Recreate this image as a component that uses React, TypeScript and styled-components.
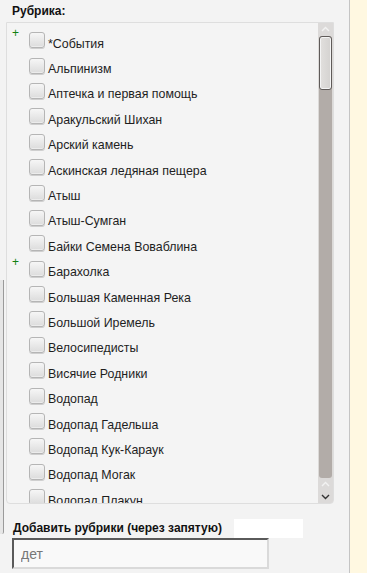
import React from "react";
import styled, { createGlobalStyle } from "styled-components";

const GlobalStyle = createGlobalStyle`
  html, body {
    margin: 0;
    padding: 0;
    background: #f3f3f3;
    overflow: hidden;
  }
`;

const rubrics = [
  { name: "*События", expandable: true },
  { name: "Альпинизм" },
  { name: "Аптечка и первая помощь" },
  { name: "Аракульский Шихан" },
  { name: "Арский камень" },
  { name: "Аскинская ледяная пещера" },
  { name: "Атыш" },
  { name: "Атыш-Сумган" },
  { name: "Байки Семена Воваблина" },
  { name: "Барахолка", expandable: true },
  { name: "Большая Каменная Река" },
  { name: "Большой Иремель" },
  { name: "Велосипедисты" },
  { name: "Висячие Родники" },
  { name: "Водопад" },
  { name: "Водопад Гадельша" },
  { name: "Водопад Кук-Караук" },
  { name: "Водопад Могак" },
  { name: "Водопад Плакун" },
];

const Arrow = ({ up }: { up?: boolean }) => (
  <svg width="9" height="6" viewBox="0 0 9 6">
    <path
      d={up ? "M1 5 L4.5 1.5 L8 5" : "M1 1 L4.5 4.5 L8 1"}
      fill="none"
      stroke={up ? "#f2f2f2" : "#333"}
      strokeWidth="1.4"
    />
  </svg>
);

export default function App() {
  return (
    <Page>
      <GlobalStyle />
      <Gutter>
        <GutterStrip />
      </Gutter>
      <Panel>
        <Title>Рубрика:</Title>
        <ListBox>
          <List>
            {rubrics.map((r) => (
              <Row key={r.name}>
                <Plus>{r.expandable ? "+" : ""}</Plus>
                <Check />
                <Label>{r.name}</Label>
              </Row>
            ))}
          </List>
          <Scrollbar>
            <StepButton>
              <Arrow up />
            </StepButton>
            <Track>
              <Thumb />
            </Track>
            <StepButton>
              <Arrow up />
            </StepButton>
            <StepButton>
              <Arrow />
            </StepButton>
          </Scrollbar>
        </ListBox>
        <AddRow>
          <AddLabel>Добавить рубрики (через запятую)</AddLabel>
          <Blank />
        </AddRow>
        <AddInput defaultValue="дет" />
      </Panel>
      <Divider />
      <Aside />
    </Page>
  );
}

const Page = styled.div`
  display: flex;
  width: 367px;
  height: 573px;
  background: #f3f3f3;
  font-family: "Liberation Sans", Arial, sans-serif;
  overflow: hidden;
`;

const Gutter = styled.div`
  width: 4px;
  flex-shrink: 0;
  padding-top: 280px;
`;

const GutterStrip = styled.div`
  width: 3px;
  height: 254px;
  background: #e6e6e6;
  border-right: 1px solid #9a9a9a;
  border-bottom-right-radius: 2px;
`;

const Panel = styled.div`
  flex: 1;
  display: flex;
  flex-direction: column;
  padding: 4px 15px 0 2px;
`;

const Title = styled.div`
  font-size: 12px;
  font-weight: bold;
  color: #111;
  height: 18px;
  padding-left: 6px;
`;

const ListBox = styled.div`
  display: flex;
  height: 480px;
  border: 1px solid #dedede;
  border-radius: 0 0 4px 4px;
  background: #f4f4f4;
  overflow: hidden;
`;

const List = styled.div`
  flex: 1;
  overflow: hidden;
  padding-top: 8px;
`;

const Row = styled.div`
  display: flex;
  align-items: center;
  height: 25.4px;
`;

const Plus = styled.div`
  width: 22px;
  flex-shrink: 0;
  align-self: flex-start;
  padding-left: 5px;
  box-sizing: border-box;
  margin-top: -4px;
  color: #128012;
  font-size: 12px;
  line-height: 12px;
`;

const Check = styled.div`
  width: 14px;
  height: 14px;
  flex-shrink: 0;
  margin-bottom: 7px;
  border: 1px solid #b5b5b5;
  border-radius: 3px;
  background: linear-gradient(#f6f6f6, #dcdcdc);
  box-shadow: inset 0 -1px 0 #ececec, 0 1px 0 #cfcfcf;
`;

const Label = styled.span`
  font-size: 12.4px;
  color: #1e1e1e;
  white-space: nowrap;
  margin-left: 3px;
`;

const Scrollbar = styled.div`
  width: 15px;
  flex-shrink: 0;
  display: flex;
  flex-direction: column;
  background: #dcdad8;
`;

const StepButton = styled.div`
  height: 12.5px;
  display: flex;
  align-items: center;
  justify-content: center;
  background: #dcdad9;
`;

const Track = styled.div`
  flex: 1;
  display: flex;
  flex-direction: column;
  background: #b2aca8;
  margin: 0 1px;
  border-radius: 3px;
`;

const Thumb = styled.div`
  height: 52px;
  border: 1px solid #5f5b59;
  border-radius: 3px;
  background: linear-gradient(90deg, #e2e0de, #d4d2d0);
  box-shadow: inset 0 0 0 1px #f4f4f4;
`;

const AddRow = styled.div`
  display: flex;
  align-items: center;
  gap: 12px;
  height: 20px;
  margin-top: 14px;
  padding-left: 7px;
`;

const AddLabel = styled.div`
  font-size: 12px;
  font-weight: bold;
  color: #111;
  white-space: nowrap;
`;

const Blank = styled.div`
  width: 69px;
  height: 19px;
  background: #ffffff;
`;

const AddInput = styled.input`
  width: 257px;
  height: 31px;
  box-sizing: border-box;
  margin: 0 0 0 6px;
  padding: 0 0 0 7px;
  border: none;
  border-top: 2px solid #5a5a5a;
  border-left: 2px solid #5a5a5a;
  border-right: 2px solid #dadada;
  border-bottom: 2px solid #dadada;
  background: #f9f9f9;
  font-family: "Liberation Sans", Arial, sans-serif;
  font-size: 14px;
  color: #777;
  outline: none;
`;

const Divider = styled.div`
  width: 1px;
  flex-shrink: 0;
  background: #c4c4c4;
`;

const Aside = styled.div`
  width: 17px;
  flex-shrink: 0;
  background: #fff8e1;
`;
